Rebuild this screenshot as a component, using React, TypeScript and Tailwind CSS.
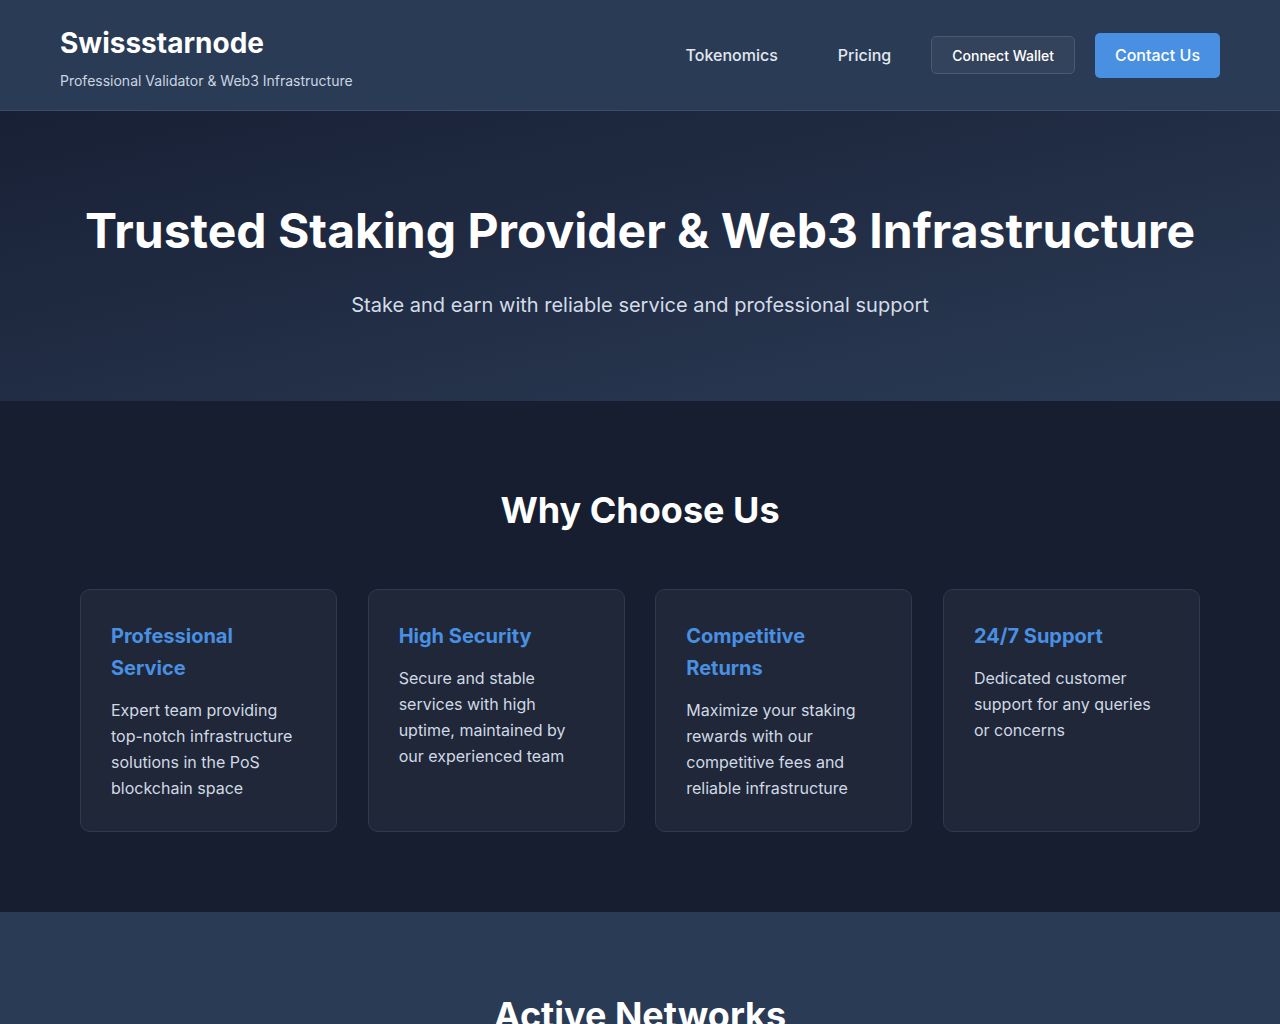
const features = [
  {
    title: 'Professional Service',
    text: 'Expert team providing top-notch infrastructure solutions in the PoS blockchain space',
  },
  {
    title: 'High Security',
    text: 'Secure and stable services with high uptime, maintained by our experienced team',
  },
  {
    title: 'Competitive Returns',
    text: 'Maximize your staking rewards with our competitive fees and reliable infrastructure',
  },
  {
    title: '24/7 Support',
    text: 'Dedicated customer support for any queries or concerns',
  },
]

export default function App() {
  return (
    <div className="min-h-screen bg-[#161e30] font-['Inter',sans-serif] text-white antialiased">
      {/* Header */}
      <header className="h-[111px] bg-[#2a3b55] border-b border-[#3c4d66] flex items-center justify-between px-[60px]">
        <div className="flex flex-col pt-[6px]">
          <h1 className="text-[28px] leading-[34px] font-bold text-white">Swissstarnode</h1>
          <p className="mt-[11px] text-[14px] leading-[20px] text-[#cbd5e1]">Professional Validator &amp; Web3 Infrastructure</p>
        </div>
        <nav className="flex items-center gap-5">
          <a href="#" className="px-5 py-2 text-[16px] font-medium text-[#e2e8f0]">Tokenomics</a>
          <a href="#" className="px-5 py-2 text-[16px] font-medium text-[#e2e8f0]">Pricing</a>
          <button className="h-[38px] px-[20px] rounded-[5px] bg-[#34435c] border border-[#4a5a72] text-[14px] font-medium text-white">
            Connect Wallet
          </button>
          <button className="h-[45px] px-[20px] rounded-[5px] bg-[#4a90e2] text-[16px] font-medium text-white">
            Contact Us
          </button>
        </nav>
      </header>

      {/* Hero */}
      <section className="h-[290px] bg-gradient-to-br from-[#182035] to-[#2b3b55] flex flex-col items-center pt-[91px]">
        <h2 className="text-[48px] leading-[58px] font-bold text-white">
          Trusted Staking Provider &amp; Web3 Infrastructure
        </h2>
        <p className="mt-[32px] text-[20px] leading-[26px] text-[#d4dce8]">
          Stake and earn with reliable service and professional support
        </p>
      </section>

      {/* Why Choose Us */}
      <section className="bg-[#161e30] pt-[87px] pb-[80px]">
        <h2 className="text-center text-[36px] leading-[44px] font-bold text-white">Why Choose Us</h2>
        <div className="mt-[57px] mx-auto w-[1120px] grid grid-cols-4 gap-[30.5px]">
          {features.map((f) => (
            <div
              key={f.title}
              className="rounded-[10px] bg-[#1f2739] border border-[#2f3a4d] px-[30px] pt-[30px] pb-[30px]"
            >
              <h3 className="text-[20px] leading-[32px] font-bold text-[#4a90e2]">{f.title}</h3>
              <p className="mt-[13px] text-[16px] leading-[26px] text-[#d1d9e4]">{f.text}</p>
            </div>
          ))}
        </div>
      </section>

      {/* Active Networks */}
      <section className="bg-[#2a3b55] pt-[81px] pb-[80px]">
        <h2 className="text-center text-[36px] leading-[44px] font-bold text-white">Active Networks</h2>
        <div className="h-[200px]" />
      </section>
    </div>
  )
}
